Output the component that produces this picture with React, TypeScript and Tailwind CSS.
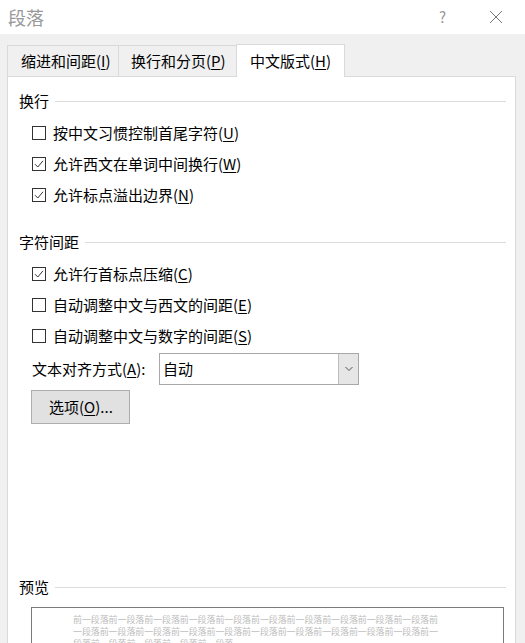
import React from "react";

const font = "font-['Noto_Sans_CJK_SC','Microsoft_YaHei',sans-serif]";

function Acc({ label, k }: { label: string; k: string }) {
  return (
    <span>
      {label}(<span className="underline underline-offset-2">{k}</span>)
    </span>
  );
}

function Box({ checked }: { checked: boolean }) {
  return (
    <span className="flex h-[14px] w-[14px] shrink-0 items-center justify-center border border-[#333] bg-white">
      {checked && (
        <svg width="12" height="12" viewBox="0 0 12 12">
          <path d="M2 6.2 L4.8 9 L10 2.8" fill="none" stroke="#333" strokeWidth="1" />
        </svg>
      )}
    </span>
  );
}

function Check({ checked, label, k }: { checked: boolean; label: string; k: string }) {
  return (
    <div className="flex h-[31px] items-center gap-[7px] pl-[13px]">
      <Box checked={checked} />
      <Acc label={label} k={k} />
    </div>
  );
}

function Section({ title }: { title: string }) {
  return (
    <div className="flex h-[20px] items-center gap-[6px]">
      <span>{title}</span>
      <div className="h-px flex-1 bg-[#dcdcdc]" />
    </div>
  );
}

export default function App() {
  const row1 = "前" + "一段落前".repeat(10);
  const row2 = "一段落前".repeat(10) + "一";
  const row3 = "段落前一段落前一段落前一段落前一段落";
  return (
    <div className={`${font} flex h-[643px] w-[525px] flex-col overflow-hidden bg-[#f0f0f0] text-[15px] leading-[20px] text-black`}>
      <div className="flex h-[34px] shrink-0 items-center bg-white pl-[8px]">
        <span className="text-[18px] text-[#999]">段落</span>
        <span className="ml-auto mr-[43px] text-[15px] text-[#999]">?</span>
        <svg width="14" height="14" viewBox="0 0 14 14" className="mr-[22px]">
          <path d="M1 1 L13 13 M13 1 L1 13" stroke="#777" strokeWidth="1" />
        </svg>
      </div>
      <div className="flex h-[42px] shrink-0 items-end pl-[7px]">
        <div className="flex h-[31px] w-[111px] items-center border-l border-t border-[#d9d9d9] pl-[13px]">
          <Acc label="缩进和间距" k="I" />
        </div>
        <div className="flex h-[31px] w-[118px] items-center border-l border-t border-[#d9d9d9] pl-[12px]">
          <Acc label="换行和分页" k="P" />
        </div>
        <div className="relative z-10 -mb-px flex h-[33px] w-[109px] items-center border-x border-t border-[#d9d9d9] bg-white pl-[13px]">
          <Acc label="中文版式" k="H" />
        </div>
      </div>
      <div className="ml-[7px] mr-[9px] flex flex-1 flex-col border-l border-r border-t border-[#d9d9d9] bg-white pl-[11px] pr-[9px] pt-[14px]">
        <Section title="换行" />
        <div className="mt-[6px]">
          <Check checked={false} label="按中文习惯控制首尾字符" k="U" />
          <Check checked label="允许西文在单词中间换行" k="W" />
          <Check checked label="允许标点溢出边界" k="N" />
        </div>
        <div className="mt-[22px]">
          <Section title="字符间距" />
        </div>
        <div className="mt-[6px]">
          <Check checked label="允许行首标点压缩" k="C" />
          <Check checked={false} label="自动调整中文与西文的间距" k="E" />
          <Check checked={false} label="自动调整中文与数字的间距" k="S" />
        </div>
        <div className="mt-[2px] flex items-center pl-[13px]">
          <span className="w-[127px]">
            <Acc label="文本对齐方式" k="A" />:
          </span>
          <div className="flex h-[32px] w-[200px] items-stretch border border-[#a8a8a8] bg-white">
            <span className="flex flex-1 items-center pl-[3px]">自动</span>
            <span className="flex w-[20px] items-center justify-center border-l border-[#bdbdbd] bg-[#e6e6e6]">
              <svg width="8" height="6" viewBox="0 0 8 6">
                <path d="M0.5 1 L4 4.5 L7.5 1" fill="none" stroke="#555" strokeWidth="1" />
              </svg>
            </span>
          </div>
        </div>
        <div className="ml-[12px] mt-[5px] flex h-[34px] w-[99px] items-center border border-[#adadad] bg-[#e1e1e1] pl-[17px]">
          <Acc label="选项" k="O" />
          ...
        </div>
        <div className="mt-[153px]">
          <Section title="预览" />
        </div>
        <div className="ml-[12px] mr-[2px] mt-[10px] flex-1 border border-[#7a7a7a] pl-[41px] pt-[6px] text-[9px] leading-[12px] tracking-[-0.1px] text-[#bdbdbd]">
          <div className="whitespace-nowrap">{row1}</div>
          <div className="whitespace-nowrap">{row2}</div>
          <div className="whitespace-nowrap">{row3}</div>
        </div>
      </div>
    </div>
  );
}
